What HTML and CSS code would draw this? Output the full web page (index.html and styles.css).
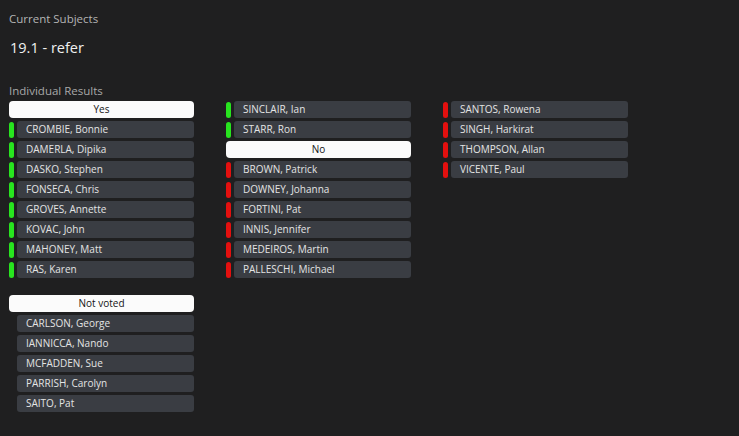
FILE: index.html
```html
<!DOCTYPE html>
<html>
<head>
<meta charset="utf-8">
<link rel="stylesheet" href="styles.css">
</head>
<body>
<div class="page">
  <div class="subtitle">Current Subjects</div>
  <div class="subject">19.1 - refer</div>
  <div class="section-label">Individual Results</div>
  <div class="columns">
    <div class="col">
      <div class="group">
        <div class="pill">Yes</div>
        <div class="row"><span class="ind yes"></span><span class="card">CROMBIE, Bonnie</span></div>
        <div class="row"><span class="ind yes"></span><span class="card">DAMERLA, Dipika</span></div>
        <div class="row"><span class="ind yes"></span><span class="card">DASKO, Stephen</span></div>
        <div class="row"><span class="ind yes"></span><span class="card">FONSECA, Chris</span></div>
        <div class="row"><span class="ind yes"></span><span class="card">GROVES, Annette</span></div>
        <div class="row"><span class="ind yes"></span><span class="card">KOVAC, John</span></div>
        <div class="row"><span class="ind yes"></span><span class="card">MAHONEY, Matt</span></div>
        <div class="row"><span class="ind yes"></span><span class="card">RAS, Karen</span></div>
      </div>
      <div class="group notvoted">
        <div class="pill">Not voted</div>
        <div class="row"><span class="ind"></span><span class="card">CARLSON, George</span></div>
        <div class="row"><span class="ind"></span><span class="card">IANNICCA, Nando</span></div>
        <div class="row"><span class="ind"></span><span class="card">MCFADDEN, Sue</span></div>
        <div class="row"><span class="ind"></span><span class="card">PARRISH, Carolyn</span></div>
        <div class="row"><span class="ind"></span><span class="card">SAITO, Pat</span></div>
      </div>
    </div>
    <div class="col">
      <div class="group">
        <div class="row"><span class="ind yes"></span><span class="card">SINCLAIR, Ian</span></div>
        <div class="row"><span class="ind yes"></span><span class="card">STARR, Ron</span></div>
        <div class="pill">No</div>
        <div class="row"><span class="ind no"></span><span class="card">BROWN, Patrick</span></div>
        <div class="row"><span class="ind no"></span><span class="card">DOWNEY, Johanna</span></div>
        <div class="row"><span class="ind no"></span><span class="card">FORTINI, Pat</span></div>
        <div class="row"><span class="ind no"></span><span class="card">INNIS, Jennifer</span></div>
        <div class="row"><span class="ind no"></span><span class="card">MEDEIROS, Martin</span></div>
        <div class="row"><span class="ind no"></span><span class="card">PALLESCHI, Michael</span></div>
      </div>
    </div>
    <div class="col">
      <div class="group">
        <div class="row"><span class="ind no"></span><span class="card">SANTOS, Rowena</span></div>
        <div class="row"><span class="ind no"></span><span class="card">SINGH, Harkirat</span></div>
        <div class="row"><span class="ind no"></span><span class="card">THOMPSON, Allan</span></div>
        <div class="row"><span class="ind no"></span><span class="card">VICENTE, Paul</span></div>
      </div>
    </div>
  </div>
</div>
</body>
</html>
```

FILE: styles.css
```css
html, body {
  margin: 0;
  padding: 0;
  background: #1f1f20;
  height: 100%;
}
body {
  font-family: "Open Sans", "Noto Sans", sans-serif;
  color: #e2e2e2;
}
.page {
  padding: 11px 9px 0 9px;
}
.subtitle {
  font-size: 11.5px;
  line-height: 16px;
  color: #b4b4b4;
}
.subject {
  font-size: 14.5px;
  line-height: 20px;
  margin-top: 11px;
  margin-left: 1px;
  color: #f0f0f0;
}
.section-label {
  font-size: 11.5px;
  line-height: 16px;
  margin-top: 25px;
  color: #a8a8a8;
}
.columns {
  display: flex;
  gap: 32px;
  margin-top: 2px;
}
.col {
  width: 185px;
  display: flex;
  flex-direction: column;
}
.group {
  display: flex;
  flex-direction: column;
  gap: 3px;
}
.notvoted {
  margin-top: 17px;
}
.pill {
  height: 17px;
  background: #fbfbfb;
  color: #141414;
  border-radius: 4px;
  font-size: 10px;
  line-height: 17px;
  text-align: center;
}
.row {
  display: flex;
  height: 17px;
  align-items: center;
}
.ind {
  width: 5px;
  height: 16px;
  border-radius: 3px;
  margin-right: 3px;
  flex: none;
}
.ind.yes { background: #28e41f; }
.ind.no { background: #e3100f; }
.card {
  flex: 1;
  height: 17px;
  background: #3a3d43;
  border-radius: 3px;
  font-size: 10px;
  line-height: 17px;
  padding-left: 9px;
  color: #e4e4e4;
  white-space: nowrap;
}
```
